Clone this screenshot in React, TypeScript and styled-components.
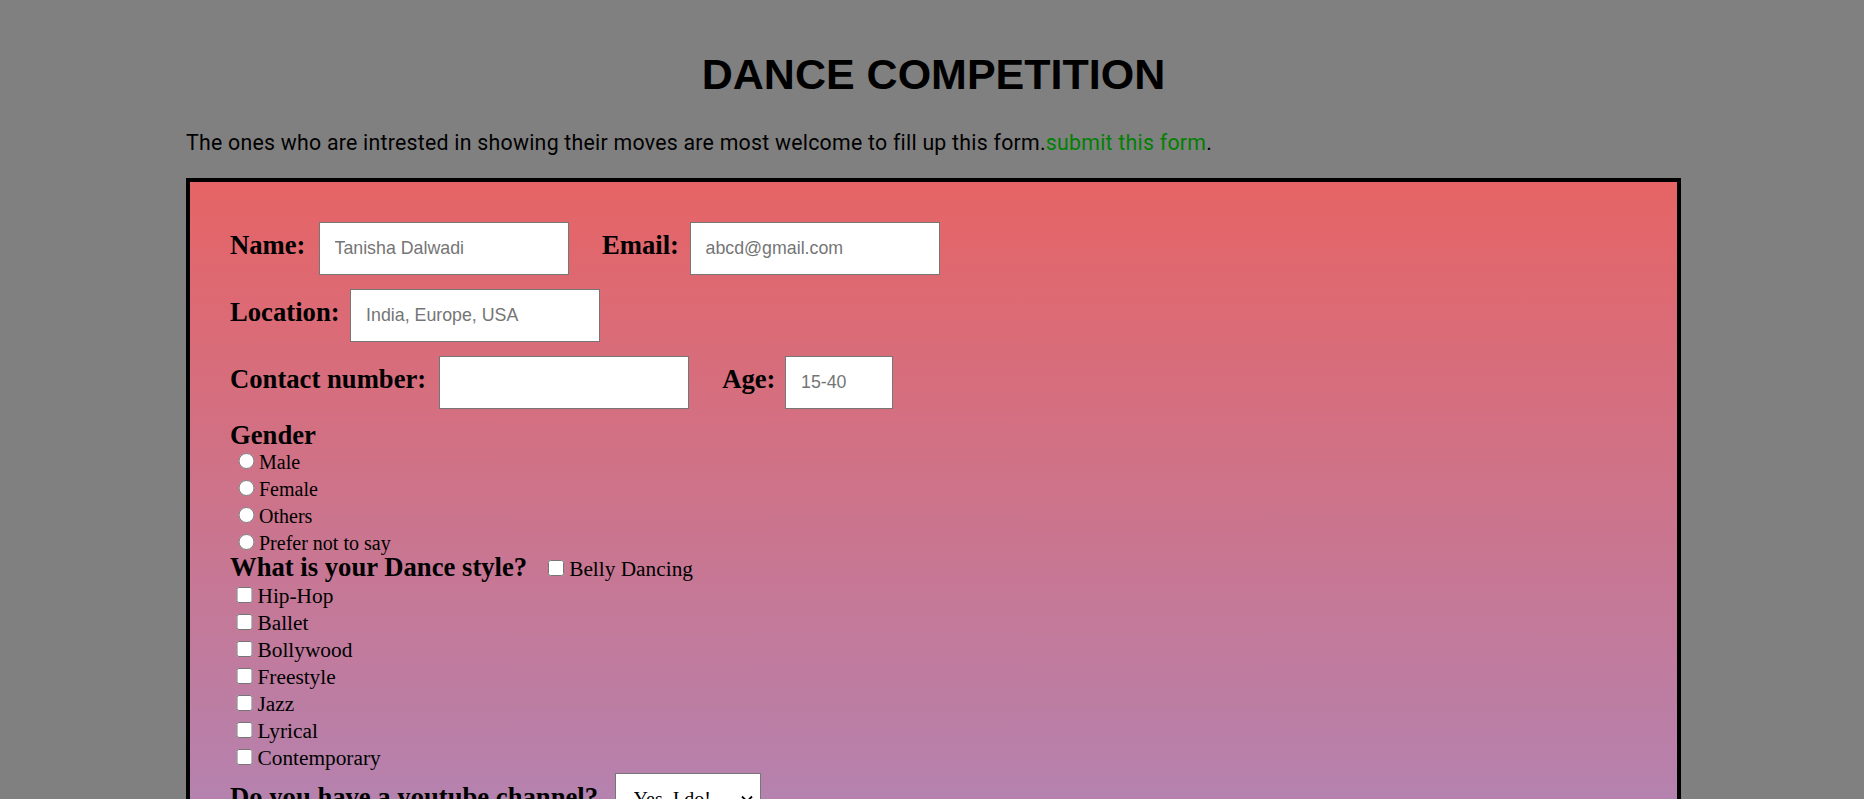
import React from "react";
import styled, { createGlobalStyle } from "styled-components";

const Global = createGlobalStyle`
  html { overflow: hidden; }
  body { margin: 0; background: #808080; }
`;

const Page = styled.div`
  padding: 0 183px 0 186px;
`;

const Title = styled.h1`
  margin: 0;
  padding-top: 53px;
  font-family: "Liberation Sans", Arial, sans-serif;
  font-weight: 700;
  font-size: 43px;
  line-height: 43px;
  text-align: center;
  color: #000;
`;

const Intro = styled.p`
  margin: 35px 0 0;
  font-family: Roboto, "Noto Sans", sans-serif;
  font-size: 21.3px;
  letter-spacing: 0.25px;
  line-height: 24px;
  color: #000;
`;

const FormLink = styled.a`
  color: #008000;
  text-decoration: none;
`;

const FormBox = styled.form`
  margin-top: 23px;
  box-sizing: border-box;
  height: 1080px;
  border: 4px solid #000;
  background: linear-gradient(#e66465, #9198e5);
  padding: 40px;
  display: flex;
  flex-direction: column;
  align-items: flex-start;
`;

const FieldRow = styled.div<{ $mb: number }>`
  display: flex;
  align-items: baseline;
  margin-bottom: ${(p) => p.$mb}px;
`;

const Label = styled.label<{ $gap: number }>`
  font-family: "Liberation Serif", "Times New Roman", serif;
  font-weight: 700;
  font-size: 26.67px;
  color: #000;
  margin-right: ${(p) => p.$gap}px;
  white-space: nowrap;
`;

const TextInput = styled.input<{ $w: number }>`
  box-sizing: border-box;
  width: ${(p) => p.$w}px;
  height: 53px;
  margin: 0 33.5px 0 0;
  border: 1px solid #767676;
  border-radius: 0;
  background: #fff;
  padding: 0 15px;
  font-family: "Liberation Sans", Arial, sans-serif;
  font-size: 17.8px;
  color: #000;
  outline: none;
  &::placeholder {
    color: #757575;
  }
`;

const GroupTitle = styled.div`
  margin-top: 12.5px;
  height: 27px;
  font-family: "Liberation Serif", "Times New Roman", serif;
  font-weight: 700;
  font-size: 26.67px;
  line-height: 27px;
  color: #000;
`;

const OptionRow = styled.label`
  display: flex;
  align-items: flex-start;
  height: 27px;
`;

const QuestionRow = styled.div`
  display: flex;
  align-items: flex-start;
  height: 27px;
`;

const QuestionLabel = styled.span`
  font-family: "Liberation Serif", "Times New Roman", serif;
  font-weight: 700;
  font-size: 26.67px;
  line-height: 20px;
  color: #000;
  white-space: nowrap;
`;

const Radio = styled.input.attrs({ type: "radio" })`
  width: 16.5px;
  height: 16.5px;
  margin: 4px 4.5px 0 8px;
`;

const Check = styled.input.attrs({ type: "checkbox" })<{ $ml: number; $mt: number }>`
  width: 16.5px;
  height: 16.5px;
  margin: ${(p) => p.$mt}px 5px 0 ${(p) => p.$ml}px;
`;

const OptionText = styled.span<{ $size: number; $lh: number }>`
  font-family: "Liberation Serif", "Times New Roman", serif;
  font-size: ${(p) => p.$size}px;
  line-height: ${(p) => p.$lh}px;
  color: #000;
  white-space: nowrap;
`;

const SelectWrap = styled.div`
  position: relative;
  display: inline-flex;
`;

const Select = styled.select`
  appearance: none;
  box-sizing: border-box;
  width: 146px;
  height: 53px;
  margin: 0;
  border: 1px solid #767676;
  border-radius: 0;
  background: #fff;
  padding: 0 30px 0 18px;
  font-family: "Liberation Serif", "Times New Roman", serif;
  font-size: 20px;
  color: #000;
  outline: none;
`;

const Chevron = styled.svg`
  position: absolute;
  right: 8px;
  top: 22px;
  width: 12px;
  height: 8px;
  pointer-events: none;
`;

const genders = ["Male", "Female", "Others", "Prefer not to say"];
const styles = ["Hip-Hop", "Ballet", "Bollywood", "Freestyle", "Jazz", "Lyrical", "Contemporary"];

export default function App() {
  return (
    <Page>
      <Global />
      <Title>DANCE COMPETITION</Title>
      <Intro>
        The ones who are intrested in showing their moves are most welcome to fill up this form.
        <FormLink href="#">submit this form</FormLink>.
      </Intro>
      <FormBox onSubmit={(e) => e.preventDefault()}>
        <FieldRow $mb={14}>
          <Label $gap={13} htmlFor="name">Name:</Label>
          <TextInput id="name" $w={250} placeholder="Tanisha Dalwadi" />
          <Label $gap={10.5} htmlFor="email">Email:</Label>
          <TextInput id="email" $w={250} placeholder="abcd@gmail.com" />
        </FieldRow>
        <FieldRow $mb={14}>
          <Label $gap={10.5} htmlFor="loc">Location:</Label>
          <TextInput id="loc" $w={250} placeholder="India, Europe, USA" />
        </FieldRow>
        <FieldRow $mb={0}>
          <Label $gap={12.5} htmlFor="contact">Contact number:</Label>
          <TextInput id="contact" $w={250} />
          <Label $gap={9.5} htmlFor="age">Age:</Label>
          <TextInput id="age" $w={108} placeholder="15-40" />
        </FieldRow>
        <GroupTitle>Gender</GroupTitle>
        {genders.map((g) => (
          <OptionRow key={g}>
            <Radio name="gender" value={g} />
            <OptionText $size={20} $lh={27}>{g}</OptionText>
          </OptionRow>
        ))}
        <QuestionRow>
          <QuestionLabel>What is your Dance style?</QuestionLabel>
          <Check $ml={20.5} $mt={3} />
          <OptionText $size={21.33} $lh={24}>Belly Dancing</OptionText>
        </QuestionRow>
        {styles.map((s) => (
          <OptionRow key={s}>
            <Check $ml={6} $mt={3} />
            <OptionText $size={21.33} $lh={25}>{s}</OptionText>
          </OptionRow>
        ))}
        <FieldRow $mb={0}>
          <Label $gap={16.5} htmlFor="yt">Do you have a youtube channel?</Label>
          <SelectWrap>
            <Select id="yt" defaultValue="yes">
              <option value="yes">Yes, I do!</option>
              <option value="no">No</option>
            </Select>
            <Chevron viewBox="0 0 12 8">
              <path d="M1 1.5 L6 6.5 L11 1.5" fill="none" stroke="#000" strokeWidth="1.8" />
            </Chevron>
          </SelectWrap>
        </FieldRow>
      </FormBox>
    </Page>
  );
}
